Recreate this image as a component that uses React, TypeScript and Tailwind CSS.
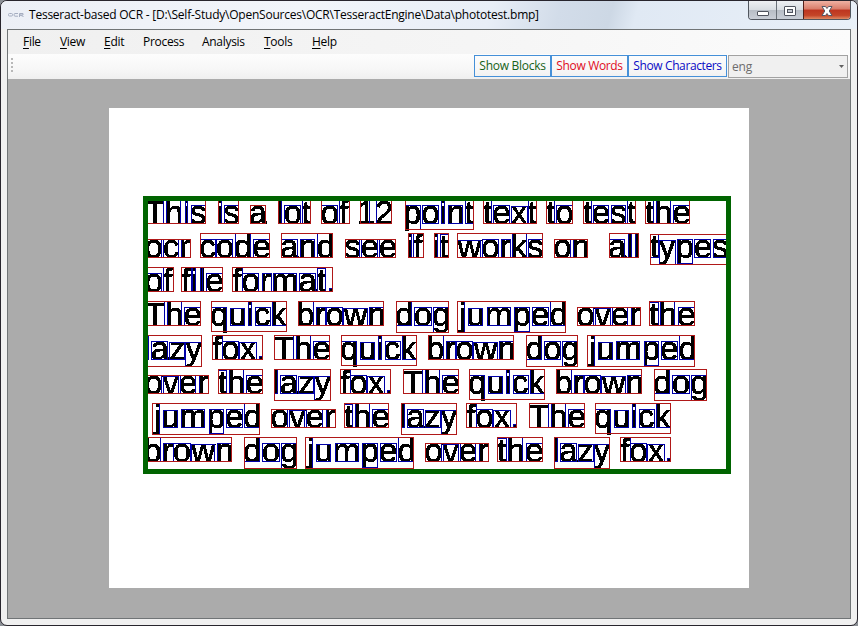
import React from "react";

// Glyph ink bounds in font units: [xMin, yMin, xMax, yMax, advance]
const GLYPHS: Record<string, number[]> = {
  a: [74, -24, 1052, 1086, 1139], b: [134, -24, 1055, 1466, 1139], c: [80, -24, 1010, 1086, 1024],
  d: [70, -24, 992, 1466, 1139], e: [75, -24, 1055, 1086, 1139], f: [18, 0, 652, 1466, 569],
  g: [66, -431, 1001, 1086, 1139], h: [135, 0, 1004, 1466, 1139], i: [136, 0, 316, 1466, 455],
  j: [-94, -431, 314, 1466, 455], k: [137, 0, 1016, 1466, 1024], l: [131, 0, 311, 1466, 455],
  m: [135, 0, 1565, 1086, 1706], n: [135, 0, 1003, 1086, 1139], o: [68, -24, 1067, 1086, 1139],
  p: [135, -407, 1057, 1086, 1139], q: [72, -407, 992, 1086, 1139], r: [133, 0, 708, 1086, 682],
  s: [63, -24, 964, 1086, 1024], t: [36, -14, 554, 1433, 569], u: [131, -24, 1000, 1062, 1139],
  v: [26, 0, 992, 1062, 1024], w: [6, 0, 1459, 1062, 1479], x: [15, 0, 1014, 1062, 1024],
  y: [33, -431, 1000, 1062, 1024], z: [41, 0, 980, 1062, 1024], T: [43, 0, 1202, 1466, 1251],
  "1": [223, 0, 787, 1466, 1139], "2": [62, 0, 1031, 1466, 1139], ".": [186, 0, 391, 205, 569],
};

type Word = [string, number, number];
const LINES: { base: number; words: Word[] }[] = [
  { base: 223, words: [["This", 145, 205], ["is", 218, 238], ["a", 250, 265], ["lot", 278, 310], ["of", 321, 349], ["12", 360, 391], ["point", 405, 473], ["text", 483, 536], ["to", 546, 572], ["test", 583, 635], ["the", 645, 689]] },
  { base: 257, words: [["ocr", 145, 190], ["code", 200, 269], ["and", 281, 332], ["see", 345, 395], ["if", 408, 423], ["it", 434, 448], ["works", 457, 542], ["on", 554, 587], ["all", 609, 638], ["types", 650, 727]] },
  { base: 291, words: [["of", 145, 173], ["file", 181, 222], ["format.", 232, 332]] },
  { base: 325, words: [["The", 145, 200], ["quick", 211, 286], ["brown", 298, 383], ["dog", 396, 448], ["jumped", 457, 565], ["over", 577, 640], ["the", 649, 694]] },
  { base: 359, words: [["lazy", 145, 201], ["fox.", 212, 262], ["The", 274, 329], ["quick", 341, 416], ["brown", 428, 513], ["dog", 526, 577], ["jumped", 587, 694]] },
  { base: 393, words: [["over", 145, 208], ["the", 218, 262], ["lazy", 274, 330], ["fox.", 340, 390], ["The", 403, 458], ["quick", 469, 544], ["brown", 556, 641], ["dog", 654, 706]] },
  { base: 427, words: [["jumped", 152, 259], ["over", 271, 335], ["the", 344, 388], ["lazy", 401, 456], ["fox.", 466, 516], ["The", 529, 584], ["quick", 595, 670]] },
  { base: 461, words: [["brown", 145, 231], ["dog", 244, 296], ["jumped", 305, 413], ["over", 425, 488], ["the", 497, 542], ["lazy", 554, 609], ["fox.", 620, 670]] },
];

const UNIT = 24 / 1480;

function layoutWord([text, left, right]: Word, base: number) {
  let pen = 0;
  const pens = [...text].map((c) => {
    const p = pen;
    pen += GLYPHS[c][4];
    return p;
  });
  const first = GLYPHS[text[0]];
  const last = GLYPHS[text[text.length - 1]];
  const sx = (right - left) / (pens[pens.length - 1] + last[2] - first[0]);
  const ox = left - first[0] * sx;
  const boxes = [...text].map((c, i) => {
    const g = GLYPHS[c];
    const x = Math.round(ox + (pens[i] + g[0]) * sx);
    const x2 = Math.round(ox + (pens[i] + g[2]) * sx);
    const y = Math.round(base - g[3] * UNIT);
    const y2 = Math.round(base - Math.min(0, g[1] + 24) * UNIT);
    return { x, y, w: x2 - x, h: y2 - y };
  });
  const top = Math.min(...boxes.map((b) => b.y));
  const bottom = Math.max(...boxes.map((b) => b.y + b.h));
  return { text, left, right, top, bottom, boxes, ox, sx };
}

function ScannedPage() {
  const words = LINES.flatMap((l) => l.words.map((w) => ({ base: l.base, ...layoutWord(w, l.base) })));
  return (
    <svg className="block h-[480px] w-[640px] bg-white" viewBox="109 108 640 480">
      <defs>
        <filter id="bilevel" x="0" y="0" width="1" height="1">
          <feComponentTransfer>
            <feFuncA type="discrete" tableValues="0 0 1 1 1" />
          </feComponentTransfer>
        </filter>
      </defs>
      <g filter="url(#bilevel)" fontFamily="'Liberation Sans', Arial, sans-serif" fontSize="32" stroke="#000" strokeWidth="0.35">
        {words.map((w, i) => (
          <text key={i} transform={`translate(${w.ox + 0.5} ${w.base + 0.7}) scale(${w.sx * 64} ${UNIT * 64})`} style={{ fontKerning: "none" }}>
            {w.text}
          </text>
        ))}
      </g>
      <g fill="none" stroke="#0000a8" shapeRendering="crispEdges">
        {words.flatMap((w, i) =>
          w.boxes.map((b, j) => <rect key={`${i}-${j}`} x={b.x + 0.5} y={b.y + 0.5} width={b.w} height={b.h} />)
        )}
      </g>
      <g fill="none" stroke="#b01818" shapeRendering="crispEdges">
        {words.map((w, i) => (
          <rect key={i} x={w.left + 0.5} y={w.top + 0.5} width={w.right - w.left} height={w.bottom - w.top} />
        ))}
      </g>
      <rect x="145.5" y="198.5" width="583" height="273" fill="none" stroke="#006400" strokeWidth="5" />
    </svg>
  );
}

const MENU = [
  { label: "File", key: true, cls: "w-[37px]" },
  { label: "View", key: true, cls: "w-[44px]" },
  { label: "Edit", key: true, cls: "w-[39px]" },
  { label: "Process", key: false, cls: "w-[59px]" },
  { label: "Analysis", key: false, cls: "w-[62px]" },
  { label: "Tools", key: true, cls: "w-[48px]" },
  { label: "Help", key: true, cls: "w-[40px]" },
];

function TitleBar() {
  return (
    <header className="flex h-[28px] items-start justify-between pl-[7px] pr-[6px] bg-[linear-gradient(105deg,#eceff6_0%,#f2f5fa_35%,#e8eef7_57%,#d2dce9_65%,#cdd8e5_71%,#e0e9f4_74%,#e9f0f8_100%)]">
      <div className="flex h-[28px] items-center">
        <svg className="mr-[5px] h-4 w-4" viewBox="0 0 16 16" fill="none" stroke="#a5adc0">
          <rect x="0.5" y="6.5" width="4" height="2.5" rx="1" />
          <path d="M10 6.5H7Q6 6.5 6 7.8T7 9.2h3M11.5 10V6.5H15v1.5h-3l3.500 1.500" />
        </svg>
        <span className="whitespace-nowrap text-[12px] tracking-[-0.23px] text-black">
          Tesseract-based OCR - [D:\Self-Study\OpenSources\OCR\TesseractEngine\Data\phototest.bmp]
        </span>
      </div>
      <div className="flex h-[19px] w-[103px] overflow-hidden rounded-b-[4px] border border-t-0 border-[#50565e]">
        <div className="flex w-[28px] items-center justify-center border-r border-[#697078] bg-[linear-gradient(#eef0f3_0%,#d9dde2_48%,#b7bdc5_50%,#c9ced6_100%)]">
          <svg className="h-[17px] w-[14px]" viewBox="0 0 14 17"><rect x="1.500" y="9.500" width="11" height="4" rx="0.5" fill="#fff" stroke="#50545e" /></svg>
        </div>
        <div className="flex w-[27px] items-center justify-center border-r border-[#54201a] bg-[linear-gradient(#eef0f3_0%,#d9dde2_48%,#b7bdc5_50%,#c9ced6_100%)]">
          <svg className="h-[17px] w-[14px]" viewBox="0 0 14 17" stroke="#50545e"><rect x="1.500" y="4.500" width="11" height="9" rx="0.5" fill="#fff" /><rect x="4.500" y="7.500" width="5" height="3" fill="#c4c8cf" /></svg>
        </div>
        <div className="flex flex-1 items-center justify-center bg-[linear-gradient(#efb1a3_0%,#d97c69_45%,#bd3520_50%,#c44528_80%,#df8a64_100%)]">
          <svg className="h-[17px] w-[14px]" viewBox="0 0 14 17"><path d="M2 4.500h3.500L7 6.500l1.500-2H12L9.200 9l2.800 4.500H8.500l-1.500-2-1.500 2H2L4.800 9z" fill="#fff" stroke="#555764" /></svg>
        </div>
      </div>
    </header>
  );
}

function MenuBar() {
  return (
    <nav className="flex h-[24px] items-center bg-[linear-gradient(90deg,#f0f0f0,#f5f5f5_55%,#fcfcfc)] pl-[15px] text-[12px] text-black">
      {MENU.map((m) => (
        <span key={m.label} className={`${m.cls} whitespace-nowrap tracking-[-0.3px]`}>
          {m.key ? <span className="underline underline-offset-2">{m.label[0]}</span> : m.label[0]}
          {m.label.slice(1)}
        </span>
      ))}
    </nav>
  );
}

function ToolBar() {
  return (
    <div className="flex h-[25px] items-start justify-between bg-[linear-gradient(#fdfdfd,#f7f7f7_60%,#efefef)] pl-[3px] pr-[2px] pt-px text-[12px]">
      <div className="mt-[3px] flex flex-col gap-[2px]">
        {[0, 1, 2, 3].map((n) => <i key={n} className="h-[2px] w-[2px] bg-[#b8b8b8]" />)}
      </div>
      <div className="flex">
        <button className="h-[22px] w-[77px] whitespace-nowrap border border-[#4590d8] tracking-[-0.28px] text-[#176217]">Show Blocks</button>
        <button className="h-[22px] w-[77px] whitespace-nowrap border border-[#4590d8] tracking-[-0.33px] text-[#e00d1d]">Show Words</button>
        <button className="mr-px h-[22px] w-[99px] whitespace-nowrap border border-[#4590d8] tracking-[-0.38px] text-[#0b0bc5]">Show Characters</button>
        <div className="flex h-[23px] w-[120px] items-center justify-between border border-[#a2a2a2] bg-[#f0f0f0] pl-[3px] pr-[3px] text-[#6d6d6d]">
          <span className="tracking-[-0.2px]">eng</span>
          <svg className="h-[3px] w-[5px]" viewBox="0 0 5 3"><path d="M0 0h5L2.500 3z" fill="#606060" /></svg>
        </div>
      </div>
    </div>
  );
}

export default function App() {
  return (
    <div className="h-[626px] w-[858px] overflow-hidden bg-[#8b8f95] font-['Open_Sans','Noto_Sans',sans-serif]">
      <div className="flex h-[626px] w-[858px] flex-col overflow-hidden rounded-[7px] border border-[#28252d] bg-[#f0f0f0]">
        <TitleBar />
        <main className="mx-[6px] flex h-[590px] flex-col border border-[#707476] bg-[#ababab]">
          <MenuBar />
          <ToolBar />
          <section className="flex flex-1 pl-[101px] pt-[29px]">
            <ScannedPage />
          </section>
        </main>
      </div>
    </div>
  );
}
